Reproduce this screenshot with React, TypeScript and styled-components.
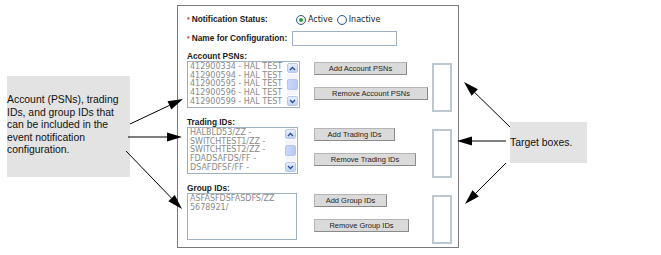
import React from "react";
import styled, { createGlobalStyle } from "styled-components";

const GlobalStyle = createGlobalStyle`
  html, body {
    margin: 0;
    padding: 0;
    background: #ffffff;
  }
  body {
    font-family: "Liberation Sans", Arial, sans-serif;
  }
`;

const Page = styled.div`
  position: relative;
  width: 661px;
  height: 255px;
  display: flex;
  align-items: flex-start;
  overflow: hidden;
`;

const Callout = styled.div<{ $top: number; $left: number; $width: number; $height: number; $padTop: number }>`
  margin-top: ${(p) => p.$top}px;
  margin-left: ${(p) => p.$left}px;
  width: ${(p) => p.$width}px;
  height: ${(p) => p.$height}px;
  box-sizing: border-box;
  padding-top: ${(p) => p.$padTop}px;
  background: #e3e3e3;
  font-family: "Liberation Sans", Arial, sans-serif;
  font-size: 10.4px;
  line-height: 12.5px;
  color: #111;
  flex-shrink: 0;
`;

const Panel = styled.div`
  margin-top: 5px;
  margin-left: 47px;
  width: 282px;
  box-sizing: border-box;
  border: 1px solid #7a7a7a;
  padding: 7px 6px 3px 9px;
  flex-shrink: 0;
`;

const FieldRow = styled.div<{ $gap: number; $height: number }>`
  display: flex;
  align-items: center;
  height: ${(p) => p.$height}px;
  margin-top: ${(p) => p.$gap}px;
`;

const Label = styled.div<{ $width?: number }>`
  font-family: "Liberation Sans", Arial, sans-serif;
  font-weight: bold;
  font-size: 8.3px;
  line-height: 10px;
  color: #1a1a1a;
  width: ${(p) => (p.$width ? `${p.$width}px` : "auto")};
  flex-shrink: 0;
  white-space: nowrap;
`;

const Req = styled.span`
  color: #d23a2a;
  margin-right: 2px;
  font-size: 7px;
`;

const RadioGroup = styled.div`
  display: flex;
  align-items: center;
  font-family: "DejaVu Sans", Verdana, sans-serif;
  font-size: 8px;
  line-height: 10px;
  color: #222;
`;

const Radio = styled.span<{ $checked?: boolean }>`
  width: 8px;
  height: 8px;
  border-radius: 50%;
  border: 1px solid #2e5b87;
  background: radial-gradient(circle at 40% 35%, #ffffff 30%, #dcdcd6 100%);
  display: inline-flex;
  align-items: center;
  justify-content: center;
  margin-right: 2px;
  &::after {
    content: "";
    display: ${(p) => (p.$checked ? "block" : "none")};
    width: 4px;
    height: 4px;
    border-radius: 50%;
    background: #2f9a38;
  }
`;

const RadioText = styled.span`
  margin-right: 4px;
`;

const TextInput = styled.div`
  width: 103px;
  height: 13px;
  border: 1px solid #9fb1c2;
  background: #fff;
`;

const Section = styled.div`
  margin-top: 5px;
`;

const SectionRow = styled.div`
  display: flex;
  align-items: flex-start;
`;

const ListBox = styled.div<{ $width: number }>`
  width: ${(p) => p.$width}px;
  height: 47px;
  box-sizing: border-box;
  border: 1px solid #9fb1c2;
  background: #fff;
  display: flex;
  flex-shrink: 0;
`;

const ListItems = styled.div`
  flex: 1;
  padding: 1px 0 0 2px;
  overflow: hidden;
`;

const ListItem = styled.div`
  font-family: "DejaVu Sans", Verdana, sans-serif;
  font-size: 8px;
  line-height: 8.7px;
  color: #8a8a8a;
  white-space: nowrap;
`;

const ScrollBar = styled.div`
  width: 12px;
  height: 45px;
  box-sizing: border-box;
  display: flex;
  flex-direction: column;
  padding: 1px 1px 1px 0;
  gap: 1px;
  flex-shrink: 0;
`;

const ScrollBtn = styled.div`
  height: 10px;
  flex-shrink: 0;
  border-radius: 2px;
  background: linear-gradient(#e8effd, #c0d2f6);
  border: 1px solid #b6c8ee;
  box-sizing: border-box;
  display: flex;
  align-items: center;
  justify-content: center;
`;

const ScrollTrack = styled.div`
  flex: 1;
  display: flex;
  flex-direction: column;
  justify-content: center;
  background: #f3f5fb;
`;

const ScrollThumb = styled.div`
  height: 11px;
  border-radius: 2px;
  background: linear-gradient(90deg, #c9d8fb, #b8cbf5);
  border: 1px solid #b4c6ee;
  box-sizing: border-box;
`;

const Buttons = styled.div<{ $offset: number }>`
  display: flex;
  flex-direction: column;
  align-items: flex-start;
  gap: 12px;
  margin-left: ${(p) => p.$offset}px;
  margin-top: 1px;
`;

const ActionButton = styled.div<{ $width: number }>`
  width: ${(p) => p.$width}px;
  height: 13px;
  box-sizing: border-box;
  background: #dadada;
  border: 1px solid #8a8a8a;
  border-top-color: #b5b5b5;
  border-left-color: #b5b5b5;
  font-family: "Liberation Sans", Arial, sans-serif;
  font-size: 7.5px;
  line-height: 11px;
  color: #1e1e1e;
  text-align: center;
  white-space: nowrap;
`;

const TargetBox = styled.div`
  margin-left: auto;
  margin-top: 2px;
  width: 20px;
  height: 49px;
  box-sizing: border-box;
  border: 2px solid #bcc8d0;
  background: #fff;
`;

const ArrowLayer = styled.svg`
  position: absolute;
  left: 0;
  top: 0;
  pointer-events: none;
`;

const Chevron = ({ up }: { up?: boolean }) => (
  <svg width="7" height="5" viewBox="0 0 7 5">
    <path
      d={up ? "M1 4 L3.5 1.5 L6 4" : "M1 1 L3.5 3.5 L6 1"}
      fill="none"
      stroke="#2c4f9e"
      strokeWidth="1.4"
    />
  </svg>
);

type ListSection = {
  title: string;
  items: string[];
  listWidth: number;
  scroll: boolean;
  addLabel: string;
  addWidth: number;
  removeLabel: string;
  removeWidth: number;
};

// buttons line up at the same x whatever the list width
const BUTTON_COLUMN = 127;

const sections: ListSection[] = [
  {
    title: "Account PSNs:",
    items: [
      "412900334 - HAL TEST",
      "412900594 - HAL TEST",
      "412900595 - HAL TEST",
      "412900596 - HAL TEST",
      "412900599 - HAL TEST",
    ],
    listWidth: 113,
    scroll: true,
    addLabel: "Add Account PSNs",
    addWidth: 93,
    removeLabel: "Remove Account PSNs",
    removeWidth: 114,
  },
  {
    title: "Trading IDs:",
    items: ["HALBLD53/ZZ -", "SWITCHTEST1/ZZ -", "SWITCHTEST2/ZZ -", "FDADSAFDS/FF -", "DSAFDFSF/FF -"],
    listWidth: 111,
    scroll: true,
    addLabel: "Add Trading IDs",
    addWidth: 81,
    removeLabel: "Remove Trading IDs",
    removeWidth: 102,
  },
  {
    title: "Group IDs:",
    items: ["ASFASFDSFASDFS/ZZ", "5678921/"],
    listWidth: 110,
    scroll: false,
    addLabel: "Add Group IDs",
    addWidth: 73,
    removeLabel: "Remove Group IDs",
    removeWidth: 95,
  },
];

const arrows = [
  { x1: 130, y1: 124, x2: 183, y2: 99 },
  { x1: 128, y1: 137, x2: 182, y2: 137 },
  { x1: 126, y1: 151, x2: 182, y2: 209 },
  { x1: 510, y1: 127, x2: 464, y2: 82 },
  { x1: 506, y1: 141, x2: 457, y2: 141 },
  { x1: 506, y1: 163, x2: 465, y2: 204 },
];

function Arrow({ x1, y1, x2, y2 }: { x1: number; y1: number; x2: number; y2: number }) {
  const a = Math.atan2(y2 - y1, x2 - x1);
  const len = 15;
  const half = 4.5;
  const bx = x2 - len * Math.cos(a);
  const by = y2 - len * Math.sin(a);
  const px = -Math.sin(a) * half;
  const py = Math.cos(a) * half;
  return (
    <g>
      <line x1={x1} y1={y1} x2={bx} y2={by} stroke="#000" strokeWidth="1" />
      <polygon points={`${x2},${y2} ${bx + px},${by + py} ${bx - px},${by - py}`} fill="#000" />
    </g>
  );
}

export default function App() {
  return (
    <Page>
      <GlobalStyle />
      <Callout $top={76} $left={7} $width={123} $height={101} $padTop={18}>
        Account (PSNs), trading
        <br />
        IDs, and group IDs that
        <br />
        can be included in the
        <br />
        event notification
        <br />
        configuration.
      </Callout>

      <Panel>
        <FieldRow $gap={0} $height={13}>
          <Label $width={109}>
            <Req>*</Req>Notification Status:
          </Label>
          <RadioGroup>
            <Radio $checked />
            <RadioText>Active</RadioText>
            <Radio />
            <RadioText>Inactive</RadioText>
          </RadioGroup>
        </FieldRow>
        <FieldRow $gap={4} $height={16}>
          <Label $width={105}>
            <Req>*</Req>Name for Configuration:
          </Label>
          <TextInput />
        </FieldRow>

        {sections.map((s) => (
          <Section key={s.title}>
            <Label>{s.title}</Label>
            <SectionRow>
              <ListBox $width={s.listWidth}>
                <ListItems>
                  {s.items.map((item) => (
                    <ListItem key={item}>{item}</ListItem>
                  ))}
                </ListItems>
                {s.scroll && (
                  <ScrollBar>
                    <ScrollBtn>
                      <Chevron up />
                    </ScrollBtn>
                    <ScrollTrack>
                      <ScrollThumb />
                    </ScrollTrack>
                    <ScrollBtn>
                      <Chevron />
                    </ScrollBtn>
                  </ScrollBar>
                )}
              </ListBox>
              <Buttons $offset={BUTTON_COLUMN - s.listWidth}>
                <ActionButton $width={s.addWidth}>{s.addLabel}</ActionButton>
                <ActionButton $width={s.removeWidth}>{s.removeLabel}</ActionButton>
              </Buttons>
              <TargetBox />
            </SectionRow>
          </Section>
        ))}
      </Panel>

      <Callout $top={122} $left={51} $width={77} $height={41} $padTop={15}>
        Target boxes.
      </Callout>

      <ArrowLayer width={661} height={255}>
        {arrows.map((a, i) => (
          <Arrow key={i} {...a} />
        ))}
      </ArrowLayer>
    </Page>
  );
}
